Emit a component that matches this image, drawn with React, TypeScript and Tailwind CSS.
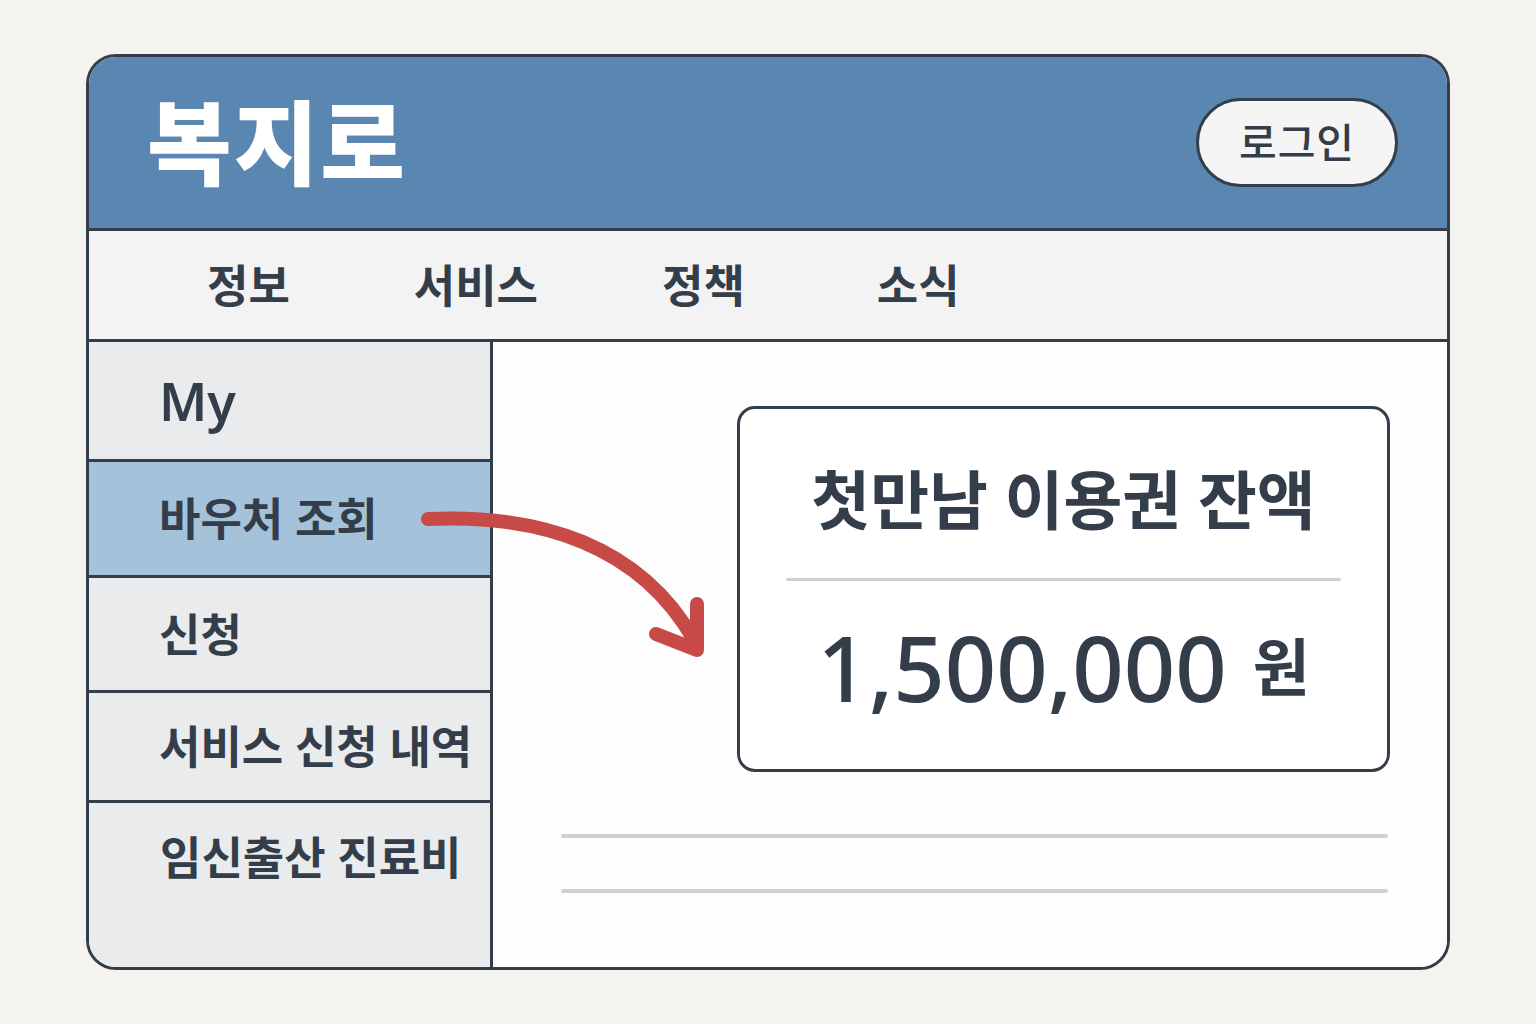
import React from "react";

const font = { fontFamily: '"Noto Sans", "Noto Sans CJK KR", sans-serif' };

const menu = [
  { label: "My", h: "h-[117px]", active: false },
  { label: "바우처 조회", h: "h-[113px]", active: true },
  { label: "신청", h: "h-[112px]", active: false },
  { label: "서비스 신청 내역", h: "h-[107px]", active: false },
];

const nav = [
  { label: "정보", cls: "" },
  { label: "서비스", cls: "ml-[124px]" },
  { label: "정책", cls: "ml-[124px]" },
  { label: "소식", cls: "ml-[132px]" },
];

function Arrow() {
  return (
    <svg
      className="absolute top-0 left-0 pointer-events-none"
      width="1536"
      height="1024"
      viewBox="0 0 1536 1024"
    >
      <g stroke="#c84a47" strokeWidth="14" strokeLinecap="round" strokeLinejoin="round" fill="none">
        <path d="M428 519 C 540 514, 640 545, 694 640" />
        <path d="M697 604 L697 650 L656 634" />
      </g>
    </svg>
  );
}

export default function App() {
  return (
    <div className="relative w-[1536px] h-[1024px] bg-[#f4f3f0] pt-[54px] pl-[86px]" style={font}>
      <div className="w-[1364px] h-[916px] border-[3px] border-[#343e4a] rounded-[30px] overflow-hidden flex flex-col bg-white">
        {/* header */}
        <div className="h-[171px] bg-[#5a86b2] flex items-center justify-between pl-[58px] pr-[49px] border-b-[3px] border-[#343e4a] box-content">
          <div className="text-white text-[92px] font-black leading-none tracking-[2px]">복지로</div>
          <button className="w-[202px] h-[89px] rounded-full border-[3px] border-[#343e4a] bg-[#f5f5f5] text-[#343e4a] text-[41px] font-medium leading-none tracking-[1px]">
            로그인
          </button>
        </div>

        {/* nav */}
        <div className="h-[108px] bg-[#f3f3f3] border-b-[3px] border-[#343e4a] box-content flex items-center pl-[118px]">
          {nav.map((n) => (
            <div key={n.label} className={`${n.cls} text-[45px] font-semibold text-[#343e4a] leading-none`}>
              {n.label}
            </div>
          ))}
        </div>

        {/* body */}
        <div className="flex flex-1 min-h-0">
          <div className="w-[401px] border-r-[3px] border-[#343e4a] box-content bg-[#eaebed] flex flex-col">
            {menu.map((m) => (
              <div
                key={m.label}
                className={`${m.h} border-b-[3px] border-[#343e4a] box-content flex items-center pl-[70px] text-[#343e4a] font-semibold leading-none ${
                  m.active ? "bg-[#a4c2d9]" : ""
                } ${m.label === "My" ? "text-[52px]" : "text-[45px]"}`}
              >
                {m.label}
              </div>
            ))}
            <div className="flex-1">
              <div className="h-[108px] flex items-center pl-[71px] text-[45px] font-semibold text-[#343e4a] leading-none">
                임신출산 진료비
              </div>
            </div>
          </div>

          <div className="flex-1 bg-[#fdfdfd] pt-[64px]">
            <div className="ml-[244px] w-[653px] h-[366px] border-[3px] border-[#343e4a] rounded-[18px] bg-white flex flex-col">
              <div className="h-[169px] pt-[12px] flex items-center justify-center text-[64px] font-semibold text-[#343e4a] leading-none">
                첫만남 이용권 잔액
              </div>
              <div className="mx-[46px] h-[3px] bg-[#cfcfcf] rounded-full" />
              <div className="h-[172px] flex items-center justify-center gap-[26px] text-[#343e4a] font-medium leading-none">
                <span className="text-[90px]">1,500,000</span>
                <span className="text-[62px] font-semibold">원</span>
              </div>
            </div>
            <div className="ml-[68px] mr-[59px] mt-[62px] h-[4px] bg-[#d0d0d0] rounded-full" />
            <div className="ml-[68px] mr-[59px] mt-[51px] h-[4px] bg-[#d0d0d0] rounded-full" />
          </div>
        </div>
      </div>
      <Arrow />
    </div>
  );
}
